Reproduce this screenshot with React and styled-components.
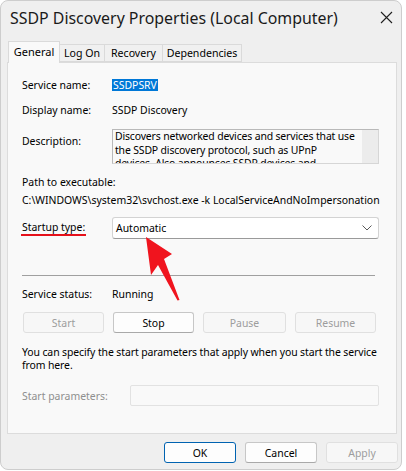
import React from "react";
import styled, { createGlobalStyle } from "styled-components";

const GlobalStyle = createGlobalStyle`
  html, body {
    margin: 0;
    padding: 0;
    background: #ffffff;
  }
  body {
    font-family: "Noto Sans", "Open Sans", sans-serif;
    font-size: 10.45px;
    color: #000;
  }
`;

const Page = styled.div`
  position: relative;
  width: 406px;
  height: 471px;
`;

const Window = styled.div`
  width: 402px;
  height: 470px;
  box-sizing: border-box;
  border: 1px solid #cdcdcd;
  border-radius: 8px;
  background: #efefef;
  display: flex;
  flex-direction: column;
  overflow: hidden;
`;

const TitleBar = styled.div`
  height: 33px;
  display: flex;
  align-items: center;
  justify-content: space-between;
  padding: 0 8px 0 9px;
  .title {
    font-size: 15.9px;
    color: #1a1a1a;
  }
`;

const TabStrip = styled.div`
  margin-top: 7px;
  padding-left: 7px;
  display: flex;
  align-items: flex-end;
  height: 21px;
  position: relative;
  z-index: 1;
`;

const Tab = styled.div`
  box-sizing: border-box;
  width: ${(p) => p.$w}px;
  height: ${(p) => (p.$active ? "22px" : "18px")};
  margin-bottom: ${(p) => (p.$active ? "-1px" : "0")};
  background: ${(p) => (p.$active ? "#f9f9f9" : "#f0f0f0")};
  border: 1px solid #dadada;
  border-bottom: ${(p) => (p.$active ? "none" : "1px solid #dadada")};
  border-left: ${(p) => (p.$first ? "1px solid #dadada" : "none")};
  display: flex;
  align-items: center;
  justify-content: center;
  font-size: ${(p) => (p.$active ? "11px" : "10.6px")};
  padding-bottom: ${(p) => (p.$active ? "2px" : "0")};
  color: #000;
`;

const Panel = styled.div`
  margin: 0 4px 0 6px;
  height: 372px;
  box-sizing: border-box;
  border: 1px solid #dcdcdc;
  background: #f9f9f9;
  padding: 14px 17px 0 14px;
  display: flex;
  flex-direction: column;
`;

const Row = styled.div`
  display: grid;
  grid-template-columns: 90px 1fr;
  align-items: ${(p) => (p.$top ? "start" : "center")};
  line-height: 16px;
  margin-top: ${(p) => p.$mt || 0}px;
  color: ${(p) => (p.$disabled ? "#8f8f8f" : "#000")};
`;

const Line = styled.div`
  line-height: 16px;
  margin-top: ${(p) => p.$mt || 0}px;
  white-space: nowrap;
`;

const Selected = styled.span`
  justify-self: start;
  display: inline-block;
  background: #0078d7;
  color: #fff;
  line-height: 12px;
  padding: 0 1px;
`;

const Description = styled.div`
  height: 35px;
  box-sizing: border-box;
  border: 1px solid #b9b9b9;
  border-right-color: #d6d6d6;
  border-bottom-color: #d6d6d6;
  display: flex;
  overflow: hidden;
  .text {
    flex: 1;
    padding: 0 1px 0 2px;
    line-height: 13.5px;
    letter-spacing: -0.15px;
    white-space: nowrap;
  }
  .scroll {
    width: 16px;
    margin-left: 1px;
    background: #ececec;
  }
`;

const StartupLabel = styled.span`
  justify-self: start;
  display: inline-block;
  line-height: 14px;
  margin-left: -1px;
  padding: 0 1px;
  border-bottom: 2px solid #e5101a;
`;

const Select = styled.div`
  height: 22px;
  box-sizing: border-box;
  border: 1px solid #d3d3d3;
  border-bottom-color: #9a9a9a;
  border-radius: 3px;
  background: #fff;
  display: flex;
  align-items: center;
  justify-content: space-between;
  padding: 0 6px 0 3px;
`;

const Separator = styled.div`
  height: 1px;
  width: 353px;
  background: #a0a0a0;
  margin-top: ${(p) => p.$mt}px;
`;

const ButtonRow = styled.div`
  display: grid;
  grid-template-columns: 81px 81px 83px 81px;
  column-gap: 9px;
  margin: ${(p) => p.$mt}px 0 0 1px;
`;

const Button = styled.div`
  height: 21px;
  box-sizing: border-box;
  border: 1px solid ${(p) => (p.$primary ? "#0063b1" : p.$disabled ? "#e0e0e0" : "#c7c7c7")};
  border-bottom-color: ${(p) => (p.$primary ? "#0063b1" : p.$disabled ? "#e0e0e0" : "#a9a9a9")};
  border-radius: 3px;
  background: ${(p) => (p.$disabled ? "#f7f7f7" : "#fdfdfd")};
  color: ${(p) => (p.$disabled ? "#9d9d9d" : "#000")};
  display: flex;
  align-items: center;
  justify-content: center;
  width: ${(p) => p.$w || "auto"};
`;

const Para = styled.div`
  margin-top: ${(p) => p.$mt}px;
  line-height: 12.5px;
  width: 362px;
  letter-spacing: -0.1px;
`;

const ParamInput = styled.div`
  height: 21px;
  box-sizing: border-box;
  border: 1px solid #e2e2e2;
  border-radius: 2px;
  background: #f9f9f9;
  margin-left: 18px;
`;

const Footer = styled.div`
  display: flex;
  justify-content: flex-end;
  gap: 9px;
  margin-top: 8px;
  padding-right: 3px;
`;

const Arrow = styled.svg`
  position: absolute;
  left: 0;
  top: 0;
  pointer-events: none;
`;

function CloseIcon() {
  return (
    <svg width="13" height="13" viewBox="0 0 13 13">
      <path d="M1 1 L12 12 M12 1 L1 12" stroke="#1f1f1f" strokeWidth="1.1" fill="none" />
    </svg>
  );
}

function Chevron() {
  return (
    <svg width="10" height="6" viewBox="0 0 10 6">
      <path d="M0.5 0.5 L5 5 L9.5 0.5" stroke="#5a5a5a" strokeWidth="1" fill="none" />
    </svg>
  );
}

const tabs = [
  { label: "General", w: 52 },
  { label: "Log On", w: 45 },
  { label: "Recovery", w: 58 },
  { label: "Dependencies", w: 79 },
];

export default function App() {
  return (
    <Page>
      <GlobalStyle />
      <Window>
        <TitleBar>
          <span className="title">SSDP Discovery Properties (Local Computer)</span>
          <CloseIcon />
        </TitleBar>

        <TabStrip>
          {tabs.map((t, i) => (
            <Tab key={t.label} $w={t.w} $active={i === 0} $first={i === 0}>
              {t.label}
            </Tab>
          ))}
        </TabStrip>

        <Panel>
          <Row>
            <span>Service name:</span>
            <Selected>SSDPSRV</Selected>
          </Row>
          <Row $mt={9}>
            <span>Display name:</span>
            <span>SSDP Discovery</span>
          </Row>
          <Row $mt={11} $top>
            <span style={{ marginTop: 4 }}>Description:</span>
            <Description>
              <div className="text">
                Discovers networked devices and services that use
                <br />
                the SSDP discovery protocol, such as UPnP
                <br />
                devices. Also announces SSDP devices and
                <br />
                services running on the local computer.
              </div>
              <div className="scroll" />
            </Description>
          </Row>
          <Line $mt={10}>Path to executable:</Line>
          <Line $mt={2}>C:\WINDOWS\system32\svchost.exe -k LocalServiceAndNoImpersonation</Line>
          <Row $mt={9}>
            <StartupLabel>Startup type:</StartupLabel>
            <Select>
              <span>Automatic</span>
              <Chevron />
            </Select>
          </Row>
          <Separator $mt={36} />
          <Row $mt={10}>
            <span>Service status:</span>
            <span>Running</span>
          </Row>
          <ButtonRow $mt={10}>
            <Button $disabled>Start</Button>
            <Button>Stop</Button>
            <Button $disabled>Pause</Button>
            <Button $disabled>Resume</Button>
          </ButtonRow>
          <Para $mt={13}>
            You can specify the start parameters that apply when you start the service from here.
          </Para>
          <Row $mt={14} $disabled>
            <span>Start parameters:</span>
            <ParamInput />
          </Row>
        </Panel>

        <Footer>
          <Button $primary $w="72px">OK</Button>
          <Button $w="72px">Cancel</Button>
          <Button $disabled $w="72px">Apply</Button>
        </Footer>
      </Window>

      <Arrow width="406" height="471" viewBox="0 0 406 471">
        <polygon
          points="146,237 172,254 164,259 179.5,300 177.5,300.5 158,265 151,275"
          fill="#f0141e"
        />
      </Arrow>
    </Page>
  );
}
